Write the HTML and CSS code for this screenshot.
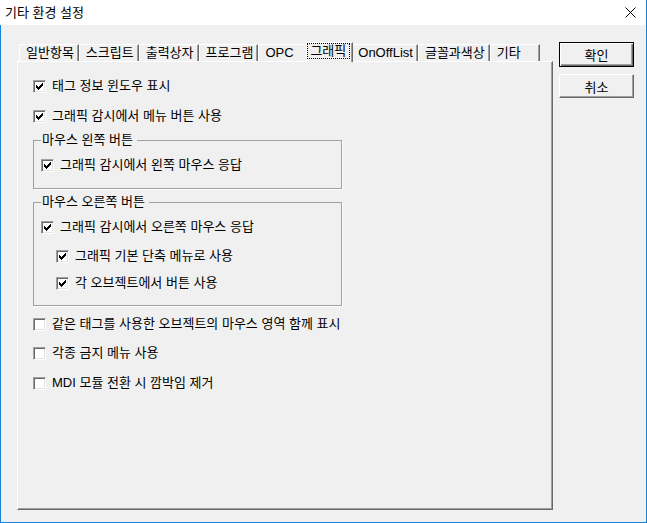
FILE: index.html
```html
<!DOCTYPE html>
<html lang="ko">
<head>
    <meta charset="UTF-8">
    <title>기타 환경 설정</title>
    <link rel="stylesheet" href="styles.css">
</head>
<body>
    <div class="window">
        <div class="titlebar">
            <span class="title">기타 환경 설정</span>
            <svg class="close" width="11" height="11" viewBox="0 0 11 11">
                <path d="M0.5 0.5 L10.5 10.5 M10.5 0.5 L0.5 10.5" stroke="#000" stroke-width="1" fill="none"/>
            </svg>
        </div>

        <div class="dialog-body">
            <div class="tab-control">
                <div class="tabs">
                    <div class="tab">일반항목</div>
                    <div class="tab">스크립트</div>
                    <div class="tab">출력상자</div>
                    <div class="tab">프로그램</div>
                    <div class="tab">OPC</div>
                    <div class="tab tab-active"><span class="focus">그래픽</span></div>
                    <div class="tab">OnOffList</div>
                    <div class="tab">글꼴과색상</div>
                    <div class="tab">기타</div>
                </div>

                <div class="tab-panel">
                    <div class="check">
                        <span class="box"><svg width="7" height="7" viewBox="0 0 7 7"><path d="M0 2h1v3h-1z M1 3h1v3h-1z M2 4h1v3h-1z M3 3h1v3h-1z M4 2h1v3h-1z M5 1h1v3h-1z M6 0h1v3h-1z" fill="#000"/></svg></span>
                        태그 정보 윈도우 표시
                    </div>
                    <div class="check gap-14">
                        <span class="box"><svg width="7" height="7" viewBox="0 0 7 7"><path d="M0 2h1v3h-1z M1 3h1v3h-1z M2 4h1v3h-1z M3 3h1v3h-1z M4 2h1v3h-1z M5 1h1v3h-1z M6 0h1v3h-1z" fill="#000"/></svg></span>
                        그래픽 감시에서 메뉴 버튼 사용
                    </div>

                    <fieldset class="group group-left">
                        <legend>마우스 왼쪽 버튼</legend>
                        <div class="check">
                            <span class="box"><svg width="7" height="7" viewBox="0 0 7 7"><path d="M0 2h1v3h-1z M1 3h1v3h-1z M2 4h1v3h-1z M3 3h1v3h-1z M4 2h1v3h-1z M5 1h1v3h-1z M6 0h1v3h-1z" fill="#000"/></svg></span>
                            그래픽 감시에서 왼쪽 마우스 응답
                        </div>
                    </fieldset>

                    <fieldset class="group group-right">
                        <legend>마우스 오른쪽 버튼</legend>
                        <div class="check">
                            <span class="box"><svg width="7" height="7" viewBox="0 0 7 7"><path d="M0 2h1v3h-1z M1 3h1v3h-1z M2 4h1v3h-1z M3 3h1v3h-1z M4 2h1v3h-1z M5 1h1v3h-1z M6 0h1v3h-1z" fill="#000"/></svg></span>
                            그래픽 감시에서 오른쪽 마우스 응답
                        </div>
                        <div class="check sub gap-13">
                            <span class="box"><svg width="7" height="7" viewBox="0 0 7 7"><path d="M0 2h1v3h-1z M1 3h1v3h-1z M2 4h1v3h-1z M3 3h1v3h-1z M4 2h1v3h-1z M5 1h1v3h-1z M6 0h1v3h-1z" fill="#000"/></svg></span>
                            그래픽 기본 단축 메뉴로 사용
                        </div>
                        <div class="check sub gap-11">
                            <span class="box"><svg width="7" height="7" viewBox="0 0 7 7"><path d="M0 2h1v3h-1z M1 3h1v3h-1z M2 4h1v3h-1z M3 3h1v3h-1z M4 2h1v3h-1z M5 1h1v3h-1z M6 0h1v3h-1z" fill="#000"/></svg></span>
                            각 오브젝트에서 버튼 사용
                        </div>
                    </fieldset>

                    <div class="check gap-10">
                        <span class="box"></span>
                        같은 태그를 사용한 오브젝트의 마우스 영역 함께 표시
                    </div>
                    <div class="check gap-13">
                        <span class="box"></span>
                        각종 금지 메뉴 사용
                    </div>
                    <div class="check gap-14">
                        <span class="box"></span>
                        MDI 모듈 전환 시 깜박임 제거
                    </div>
                </div>
            </div>

            <div class="buttons">
                <button class="btn btn-default">확인</button>
                <button class="btn">취소</button>
            </div>
        </div>
    </div>
</body>
</html>
```

FILE: styles.css
```css
* {
    box-sizing: border-box;
}

html, body {
    margin: 0;
    padding: 0;
}

body {
    font-family: "Liberation Sans", "Noto Sans CJK KR", sans-serif;
    font-size: 13px;
    color: #000;
    background: #fff;
}

.window {
    width: 647px;
    height: 523px;
    border-right: 1px solid #1a82d6;
    border-bottom: 1px solid #1a82d6;
    display: flex;
    flex-direction: column;
}

.titlebar {
    height: 25px;
    background: #fff;
    display: flex;
    align-items: center;
    justify-content: space-between;
    padding: 0 10px 0 5px;
}

.title {
    line-height: 16px;
}

.dialog-body {
    flex: 1;
    display: flex;
    gap: 6px;
    padding: 17px 0 0 16px;
    background: #f0f0f0;
    border-left: 1px solid #1a82d6;
}

/* tab control */
.tab-control {
    width: 536px;
}

.tabs {
    display: flex;
    align-items: flex-end;
    height: 19px;
    padding-left: 2px;
}

.tab {
    height: 17px;
    min-width: 50px;
    padding: 0 4px 0 6px;
    line-height: 16px;
    white-space: nowrap;
    border-top: 1px solid #fff;
    border-left: 1px solid #fff;
    border-right: 1px solid #696969;
    border-top-left-radius: 2px;
    box-shadow: inset -1px 0 0 #a0a0a0;
}

.tab-active {
    position: relative;
    z-index: 1;
    height: 20px;
    min-width: 0;
    margin: 0 -2px -1px -2px;
    padding: 1px 3px 0 1px;
    background: #f0f0f0;
}

.focus {
    display: block;
    padding: 0 3px 0 2px;
    line-height: 14px;
    outline: 1px dotted #000;
    outline-offset: 0;
}

.tab-panel {
    height: 449px;
    padding: 16px 15px 0 15px;
    border-top: 1px solid #fff;
    border-left: 1px solid #fff;
    border-right: 1px solid #696969;
    border-bottom: 1px solid #696969;
    box-shadow: inset -1px -1px 0 #a0a0a0;
}

/* checkboxes */
.check {
    display: flex;
    align-items: center;
    gap: 6px;
    height: 16px;
    line-height: 16px;
    white-space: nowrap;
}

.check.sub {
    margin-left: 15px;
}

.gap-10 { margin-top: 10px; }
.gap-11 { margin-top: 11px; }
.gap-13 { margin-top: 13px; }
.gap-14 { margin-top: 14px; }

.box {
    flex: none;
    width: 13px;
    height: 13px;
    display: flex;
    align-items: center;
    justify-content: center;
    background: #fff;
    border: 1px solid;
    border-color: #a0a0a0 #fff #fff #a0a0a0;
    box-shadow: inset 1px 1px 0 #696969, inset -1px -1px 0 #e3e3e3;
}

.box svg {
    display: block;
    shape-rendering: crispEdges;
}

/* group boxes */
.group {
    width: 309px;
    margin: 0;
    padding: 9px 7px 15px 7px;
    border: 1px solid #a0a0a0;
    box-shadow: 1px 1px 0 #fff;
}

.group legend {
    padding: 0 4px 0 1px;
    line-height: 16px;
}

.group-left {
    margin-top: 8px;
}

.group-right {
    margin-top: 5px;
    padding-bottom: 14px;
}

/* buttons */
.buttons {
    display: flex;
    flex-direction: column;
    gap: 7px;
    width: 75px;
}

.btn {
    height: 24px;
    padding: 0;
    font: inherit;
    color: #000;
    background: #f0f0f0;
    border: 1px solid;
    border-color: #fff #696969 #696969 #fff;
    box-shadow: inset -1px -1px 0 #a0a0a0;
}

.btn-default {
    height: 25px;
    border: 1px solid #000;
    box-shadow: inset 1px 1px 0 #fff, inset -1px -1px 0 #696969, inset -2px -2px 0 #a0a0a0;
}
```
